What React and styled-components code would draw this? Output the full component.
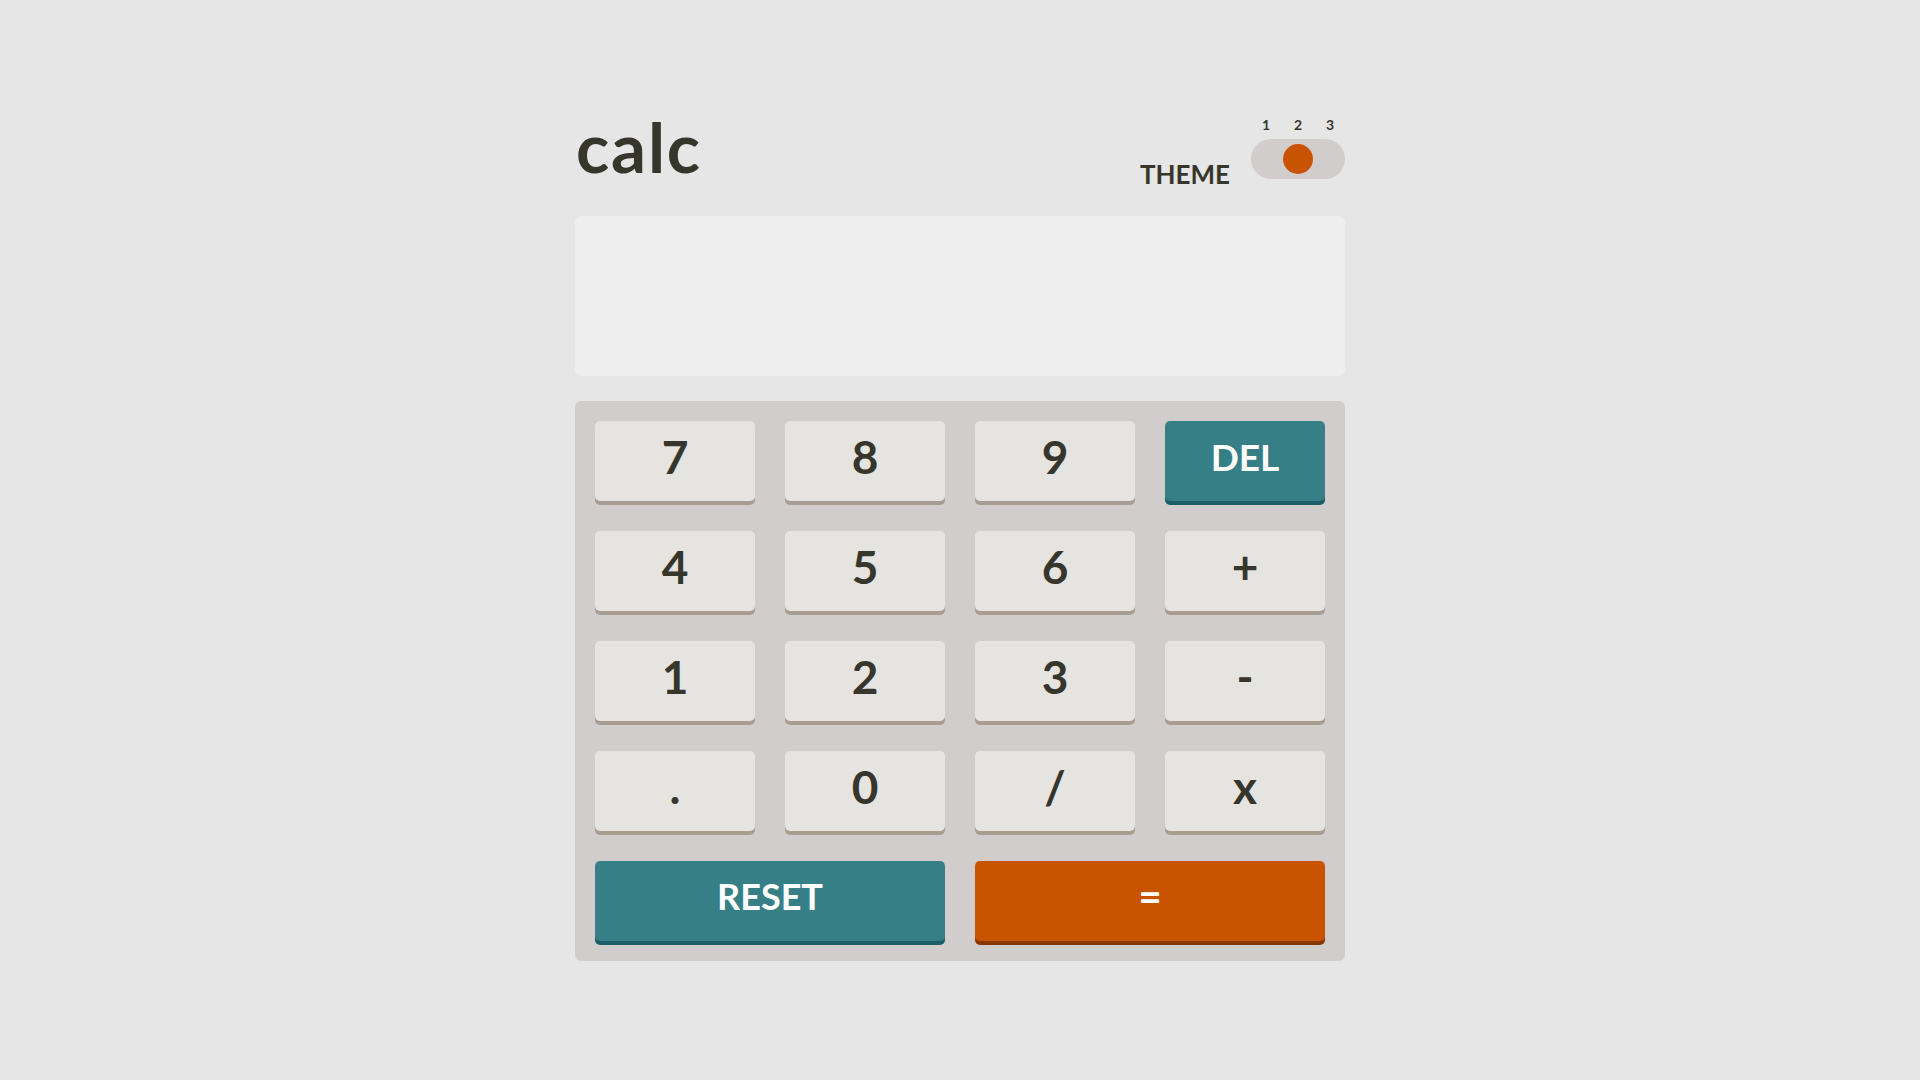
import React from 'react'
import styled, { createGlobalStyle } from 'styled-components'

const GlobalStyle = createGlobalStyle`
  * { box-sizing: border-box; }
  body {
    margin: 0;
    background: #e6e6e6;
    font-family: Lato, "Open Sans", sans-serif;
    color: #36362c;
  }
`

const Page = styled.main`
  min-height: 100vh;
  display: flex;
  justify-content: center;
  padding-top: 100px;
`

const Calculator = styled.div`
  width: 770px;
`

const Header = styled.header`
  height: 79px;
  display: flex;
  justify-content: space-between;
  align-items: flex-start;
  margin-bottom: 37px;
`

const Title = styled.h1`
  margin: 13px 0 0 1px;
  font-size: 69px;
  line-height: 68px;
  font-weight: 700;
  letter-spacing: 1.8px;
`

const ThemeBox = styled.div`
  height: 100%;
  display: flex;
  align-items: flex-end;
  gap: 21px;
`

const ThemeLabel = styled.span`
  font-size: 26px;
  line-height: 28px;
  font-weight: 700;
  letter-spacing: 0;
  margin-bottom: -9px;
`

const SwitchCol = styled.div`
  width: 94px;
  display: flex;
  flex-direction: column;
`

const Numbers = styled.div`
  display: flex;
  justify-content: center;
  margin-bottom: 7px;

  span {
    flex: none;
    width: 32px;
    text-align: center;
    font-size: 14px;
    line-height: 14px;
    font-weight: 700;
  }
`

const Track = styled.div`
  width: 94px;
  height: 40px;
  border-radius: 20px;
  background: #d2cdcd;
  display: flex;
  align-items: center;
  padding: 0 5px;
  justify-content: ${p => (p.$pos === 1 ? 'flex-start' : p.$pos === 2 ? 'center' : 'flex-end')};
`

const Knob = styled.div`
  width: 30px;
  height: 30px;
  border-radius: 50%;
  background: #c85402;
`

const Screen = styled.div`
  height: 160px;
  border-radius: 6px;
  background: #eeeeee;
  margin-bottom: 25px;
`

const Keypad = styled.div`
  background: #d2cdcd;
  border-radius: 6px;
  padding: 20px;
  display: grid;
  grid-template-columns: repeat(4, 160px);
  grid-auto-rows: 80px;
  gap: 30px;
`

const colors = {
  plain: { bg: '#e5e4e1', shadow: '#a79e91', fg: '#36362c', size: 46 },
  accent: { bg: '#377f86', shadow: '#1b6066', fg: '#ffffff', size: 37 },
  equals: { bg: '#c85402', shadow: '#873901', fg: '#ffffff', size: 46 },
}

const Key = styled.button`
  grid-column: span ${p => p.$span || 1};
  border: none;
  border-radius: 5px;
  background: ${p => colors[p.$kind].bg};
  box-shadow: 0 4px 0 ${p => colors[p.$kind].shadow};
  color: ${p => colors[p.$kind].fg};
  font-family: Lato, "Open Sans", sans-serif;
  font-weight: 700;
  font-size: ${p => p.$size || colors[p.$kind].size}px;
  display: flex;
  align-items: center;
  justify-content: center;
  padding: 0 0 10px;
  cursor: pointer;
`

const keys = [
  ['7'], ['8'], ['9'], ['DEL', 'accent'],
  ['4'], ['5'], ['6'], ['+'],
  ['1'], ['2'], ['3'], ['-'],
  ['.'], ['0'], ['/'], ['x'],
]

export default function App() {
  return (
    <>
      <GlobalStyle />
      <Page>
        <Calculator>
          <Header>
            <Title>calc</Title>
            <ThemeBox>
              <ThemeLabel>THEME</ThemeLabel>
              <SwitchCol>
                <Numbers>
                  <span>1</span>
                  <span>2</span>
                  <span>3</span>
                </Numbers>
                <Track $pos={2}>
                  <Knob />
                </Track>
              </SwitchCol>
            </ThemeBox>
          </Header>
          <Screen />
          <Keypad>
            {keys.map(([label, kind = 'plain']) => (
              <Key key={label} $kind={kind}>{label}</Key>
            ))}
            <Key $kind="accent" $span={2} $size={36}>RESET</Key>
            <Key $kind="equals" $span={2} $size={40}>=</Key>
          </Keypad>
        </Calculator>
      </Page>
    </>
  )
}
